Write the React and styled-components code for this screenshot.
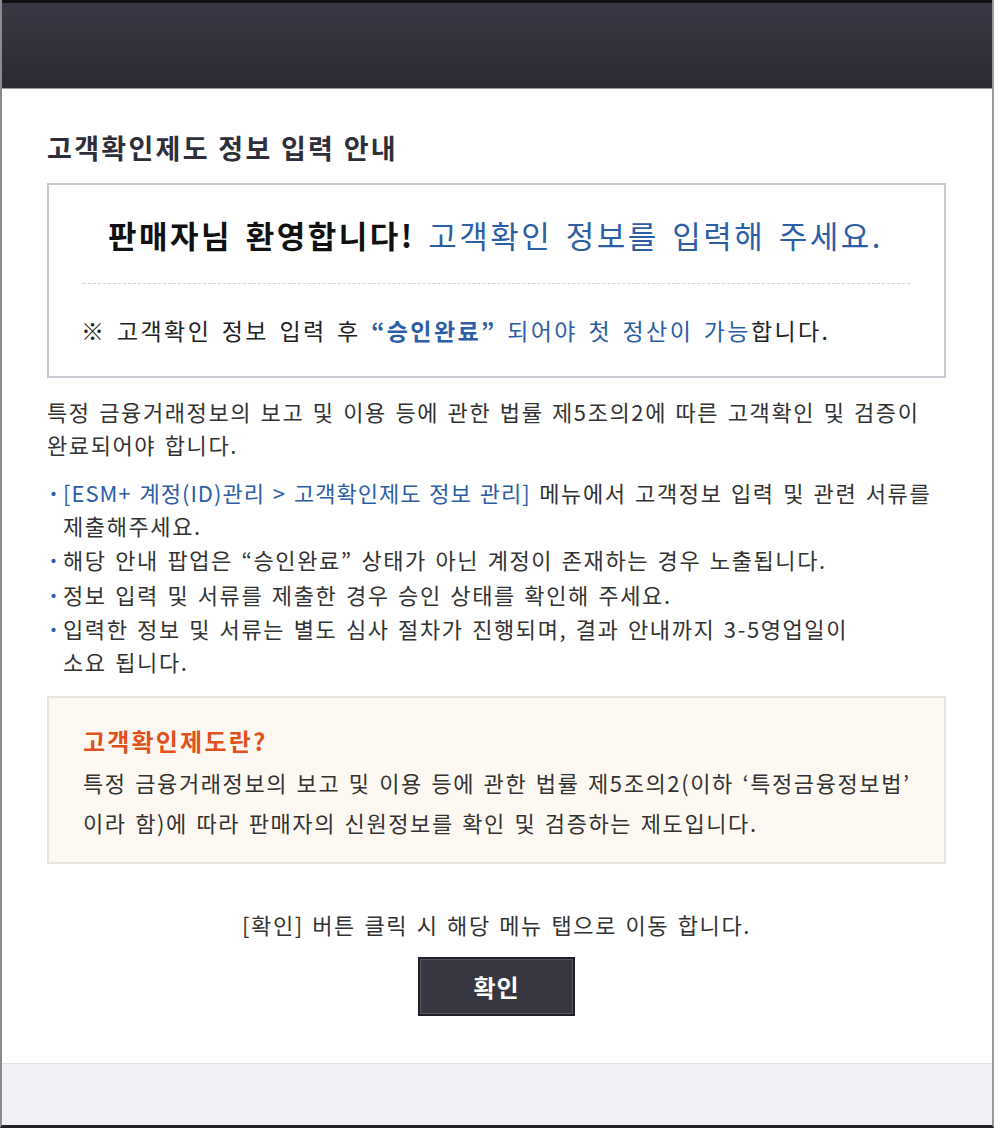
import React from "react";
import styled, { createGlobalStyle } from "styled-components";

const GlobalStyle = createGlobalStyle`
  html, body {
    margin: 0;
    padding: 0;
    background: #ffffff;
  }
  body {
    font-family: "Noto Sans CJK KR", "Noto Sans", sans-serif;
    color: #333;
  }
`;

const Page = styled.div`
  width: 1000px;
  height: 1135px;
  overflow: hidden;
  background: #fff;
`;

const Popup = styled.div`
  width: 990px;
  border-left: 2px solid #8c8c8c;
  border-right: 2px solid #9a9a9a;
  border-bottom: 3px solid #222;
  display: flex;
  flex-direction: column;
`;

const Header = styled.div`
  height: 85px;
  border-top: 3px solid #111;
  background: linear-gradient(#393945, #2a2a33);
  border-bottom: 1px solid #9a9aa2;
`;

const Body = styled.div`
  background: #fff;
  padding: 41px 46px 47px 45px;
`;

const Title = styled.h2`
  margin: 0;
  font-size: 27px;
  line-height: 36px;
  font-weight: bold;
  letter-spacing: 2.3px;
  color: #2f2f3c;
`;

const WelcomeBox = styled.div`
  margin-top: 17px;
  border: 2px solid #c9c9d2;
  padding: 30px 34px 29px 32px;
`;

const Welcome = styled.p`
  margin: 0;
  text-align: center;
  font-size: 31px;
  line-height: 40px;
  letter-spacing: 2.5px;
  word-spacing: 4px;
  font-weight: bold;
  color: #111;
`;

const Blue = styled.span`
  color: #2c5ea6;
  font-weight: ${({ $bold }) => ($bold ? "bold" : "normal")};
  letter-spacing: ${({ $tight }) => ($tight ? "1px" : "inherit")};
`;

const Divider = styled.hr`
  margin: 28px 0 29px 2px;
  border: none;
  border-top: 1px dashed #d2d2d6;
`;

const Note = styled.p`
  margin: 0;
  font-size: 23px;
  line-height: 34px;
  letter-spacing: 2.4px;
  word-spacing: 3px;
  white-space: nowrap;
  color: #222;
`;

const Paragraph = styled.p`
  margin: 17px 0 0;
  font-size: 22px;
  line-height: 33px;
  letter-spacing: 1.6px;
  word-spacing: 2px;
  white-space: nowrap;
  color: #333;
`;

const List = styled.ul`
  list-style: none;
  margin: 15px 0 0;
  padding: 0;
`;

const Item = styled.li`
  position: relative;
  padding-left: 16px;
  font-size: 22px;
  line-height: 32.5px;
  letter-spacing: 1.6px;
  word-spacing: 2px;
  white-space: nowrap;
  color: #333;
  & + & {
    margin-top: 2px;
  }
  &:before {
    content: "·";
    position: absolute;
    left: 0;
    top: 0;
    color: #2c5ea6;
    font-weight: bold;
  }
`;

const InfoBox = styled.div`
  margin-top: 19px;
  background: #fdf9f2;
  border: 2px solid #e8e5df;
  padding: 26px 34px 20px;
`;

const InfoTitle = styled.h3`
  margin: 0;
  font-size: 24px;
  line-height: 34px;
  font-weight: bold;
  letter-spacing: 2.2px;
  color: #e0521c;
`;

const InfoText = styled.p`
  margin: 4px 0 0;
  font-size: 22px;
  line-height: 40px;
  letter-spacing: 1.6px;
  word-spacing: 2px;
  white-space: nowrap;
  color: #333;
`;

const Guide = styled.p`
  margin: 45px 0 0;
  text-align: center;
  font-size: 22px;
  line-height: 30px;
  letter-spacing: 1.6px;
  word-spacing: 2px;
  color: #333;
`;

const Actions = styled.div`
  display: flex;
  justify-content: center;
  margin-top: 18px;
`;

const ConfirmButton = styled.button`
  width: 157px;
  height: 59px;
  background: #373742;
  border: 2px solid #1f1f26;
  box-shadow: inset 0 0 0 1px #55555f;
  color: #fff;
  font-family: "Noto Sans CJK KR", sans-serif;
  font-size: 24px;
  font-weight: bold;
  letter-spacing: 1px;
  cursor: pointer;
`;

const Footer = styled.div`
  height: 61px;
  background: #f2f2f6;
  border-top: 1px solid #e2e2e8;
`;

const App = () => {
  return (
    <Page>
      <GlobalStyle />
      <Popup>
        <Header />
        <Body>
          <Title>고객확인제도 정보 입력 안내</Title>
          <WelcomeBox>
            <Welcome>
              판매자님 환영합니다! <Blue>고객확인 정보를 입력해 주세요.</Blue>
            </Welcome>
            <Divider />
            <Note>
              ※ 고객확인 정보 입력 후 <Blue $bold>“승인완료”</Blue>{" "}
              <Blue>되어야 첫 정산이 가능</Blue>합니다.
            </Note>
          </WelcomeBox>
          <Paragraph>
            특정 금융거래정보의 보고 및 이용 등에 관한 법률 제5조의2에 따른
            고객확인 및 검증이
            <br />
            완료되어야 합니다.
          </Paragraph>
          <List>
            <Item>
              <Blue $tight>[ESM+ 계정(ID)관리 &gt; 고객확인제도 정보 관리]</Blue>{" "}
              메뉴에서 고객정보 입력 및 관련 서류를
              <br />
              제출해주세요.
            </Item>
            <Item>
              해당 안내 팝업은 “승인완료” 상태가 아닌 계정이 존재하는 경우
              노출됩니다.
            </Item>
            <Item>정보 입력 및 서류를 제출한 경우 승인 상태를 확인해 주세요.</Item>
            <Item>
              입력한 정보 및 서류는 별도 심사 절차가 진행되며, 결과 안내까지
              3-5영업일이
              <br />
              소요 됩니다.
            </Item>
          </List>
          <InfoBox>
            <InfoTitle>고객확인제도란?</InfoTitle>
            <InfoText>
              특정 금융거래정보의 보고 및 이용 등에 관한 법률 제5조의2(이하
              ‘특정금융정보법’
              <br />
              이라 함)에 따라 판매자의 신원정보를 확인 및 검증하는 제도입니다.
            </InfoText>
          </InfoBox>
          <Guide>[확인] 버튼 클릭 시 해당 메뉴 탭으로 이동 합니다.</Guide>
          <Actions>
            <ConfirmButton>확인</ConfirmButton>
          </Actions>
        </Body>
        <Footer />
      </Popup>
    </Page>
  );
};

export default App;
